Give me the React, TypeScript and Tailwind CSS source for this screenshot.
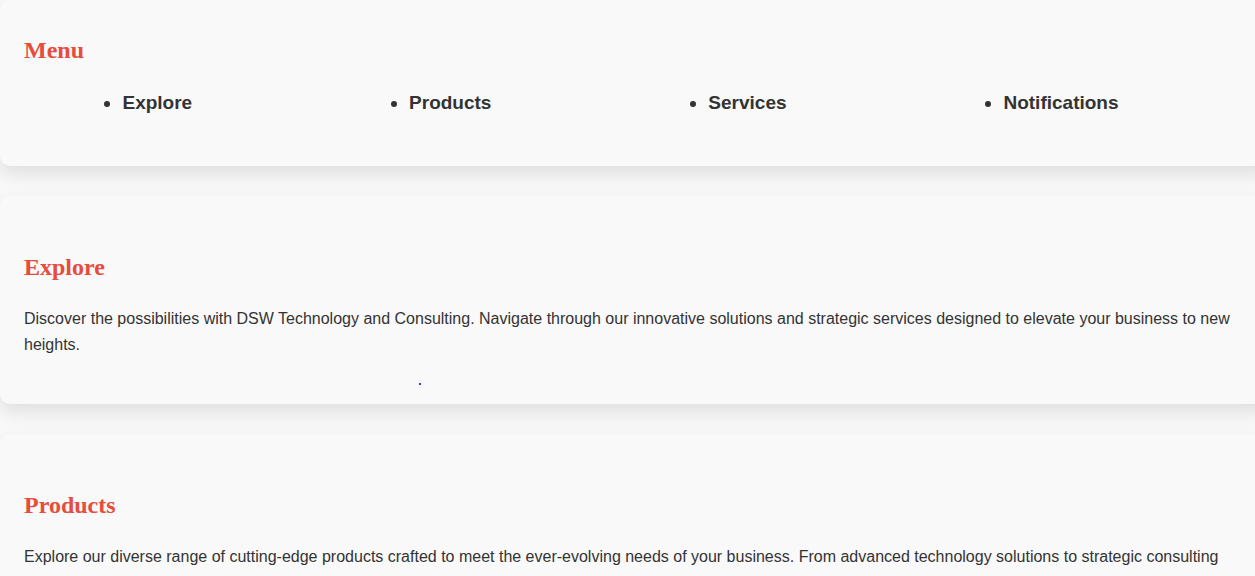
const menuItems = ["Explore", "Products", "Services", "Notifications"];

const sections = [
    {
        title: "Explore",
        text: "Discover the possibilities with DSW Technology and Consulting. Navigate through our innovative solutions and strategic services designed to elevate your business to new heights.",
        dot: true,
    },
    {
        title: "Products",
        text: "Explore our diverse range of cutting-edge products crafted to meet the ever-evolving needs of your business. From advanced technology solutions to strategic consulting tailored to your unique goals, we have everything you need to succeed.",
        dot: false,
    },
    {
        title: "Services",
        text: "Our expert team delivers consulting, integration and support services that keep your business moving forward.",
        dot: false,
    },
    {
        title: "Notifications",
        text: "Stay up to date with the latest news, updates and announcements from DSW Technology and Consulting.",
        dot: false,
    },
];

function Card({children, className = ""}: { children: React.ReactNode; className?: string }) {
    return (
        <section
            className={"w-[calc(100%+16px)] bg-[#f9f9f9] rounded-[10px] pl-6 pr-10 shadow-[0_8px_18px_rgba(0,0,0,0.1)] " + className}>
            {children}
        </section>
    );
}

export default function App() {
    return (
        <div className="min-h-screen overflow-x-hidden bg-[#f8f8f8] text-[#333] font-['Liberation_Sans',Arial,sans-serif]">
            {/* menu */}
            <Card className="pt-[36px] pb-[51px]">
                <h2 className="text-[24px] leading-[28px] font-bold text-[#e74c3c] font-['Liberation_Serif','Times_New_Roman',serif]">
                    Menu
                </h2>
                <ul className="mt-[27px] -ml-[10px] mr-[4px] flex justify-around list-disc">
                    {menuItems.map((item) => (
                        <li key={item} className="text-[19px] leading-[24px] font-bold text-[#333]">
                            {item}
                        </li>
                    ))}
                </ul>
            </Card>

            {sections.map((s) => (
                <Card key={s.title} className="mt-[30px] pt-[57px] pb-[46px]">
                    <h2 className="text-[24px] leading-[28px] font-bold text-[#e74c3c] font-['Liberation_Serif','Times_New_Roman',serif]">
                        {s.title}
                    </h2>
                    <p className="mt-[25px] text-[16px] leading-[26px] text-[#333]">{s.text}</p>
                    {s.dot && (
                        <div className="relative h-0">
                            <span className="absolute left-[395px] top-[25px] w-[2px] h-[2px] bg-[#3030ff]"/>
                        </div>
                    )}
                </Card>
            ))}
        </div>
    );
}
